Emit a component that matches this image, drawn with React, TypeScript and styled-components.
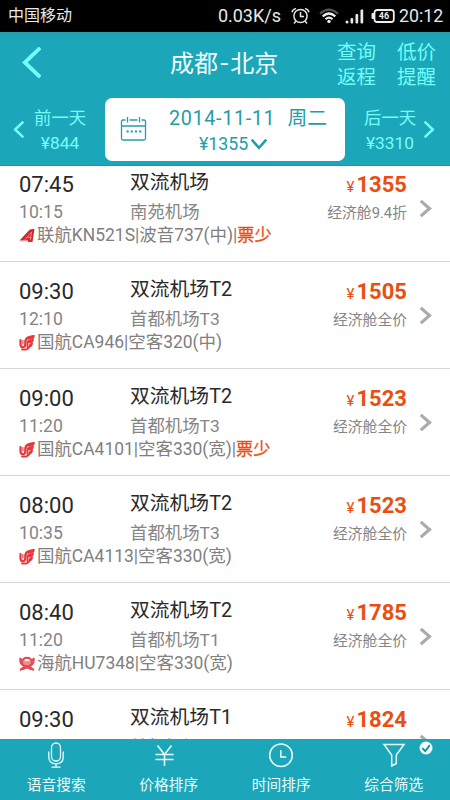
import React from 'react';
import styled, { createGlobalStyle } from 'styled-components';

const teal = '#1ca6b9';
const aqua = '#74fdf8';
const orange = '#ea4e10';

const GlobalStyle = createGlobalStyle`
  * { box-sizing: border-box; }
  body {
    margin: 0;
    overflow: hidden;
    font-family: Roboto, "Noto Sans CJK SC", sans-serif;
  }
  svg { display: block; flex: none; }
`;

const Screen = styled.div`
  width: 450px;
  height: 800px;
  display: flex;
  flex-direction: column;
  overflow: hidden;
  background: #fff;
  white-space: nowrap;
`;

const StatusBar = styled.div`
  height: 32px;
  flex: none;
  display: flex;
  align-items: center;
  padding: 0 7px 0 8px;
  background: #000;
  color: #e8e8e8;
  font-size: 17px;
`;

const Carrier = styled.span`
  font-size: 16px;
  line-height: 32px;
  flex: 1;
`;

const StatusItem = styled.div<{ $gap: number }>`
  margin-left: ${(p) => p.$gap}px;
  line-height: 32px;
`;

const Speed = styled.span`
  line-height: 34px;
  font-size: 18px;
`;

const Clock = styled.span`
  margin-left: 4px;
  width: 44px;
  line-height: 34px;
  font-size: 17.8px;
`;

const Header = styled.header`
  height: 134px;
  flex: none;
  background: linear-gradient(#2b9aaa 0, ${teal} 5px);
  border-bottom: 1px solid #1b97ac;
`;

const TitleBar = styled.div`
  height: 66px;
  display: flex;
  padding-left: 22px;
`;

const BackButton = styled.div`
  width: 148px;
  padding-top: 15px;
`;

const Title = styled.h1`
  margin: 0;
  flex: 1;
  font-size: 24px;
  line-height: 64px;
  font-weight: 400;
  color: #f2ffff;
`;

const Hyphen = styled.span`
  margin: 0 1.4px;
  line-height: 1;
  font-family: "Noto Sans CJK SC", sans-serif;
  font-size: 27px;
`;

const HeaderAction = styled.div`
  width: 60px;
  padding-top: 9px;
  font-size: 19.5px;
  line-height: 24.5px;
  color: ${aqua};
  &:last-child { width: 53px; }
`;

const DateBar = styled.div`
  height: 63px;
  display: flex;
  align-items: stretch;
`;

const DaySwitch = styled.div<{ $side: 'prev' | 'next' }>`
  width: 105px;
  display: flex;
  align-items: flex-start;
  padding-left: ${(p) => (p.$side === 'prev' ? 13 : 19)}px;
  color: ${aqua};
  & > svg { margin-top: 23px; }
`;

const DayText = styled.div<{ $left: number }>`
  width: 52px;
  margin-left: ${(p) => p.$left}px;
  margin-right: 8px;
  padding-top: 8px;
  text-align: center;
  font-size: 17.4px;
  line-height: 24.5px;
`;

const DatePanel = styled.div`
  width: 240px;
  display: flex;
  padding-left: 15px;
  border-radius: 7px;
  background: #fff;
  color: #279ca9;
  & > svg { margin-top: 18px; }
`;

const DateText = styled.div`
  margin-left: 21px;
  width: 160px;
  padding-top: 7px;
`;

const CurrentDate = styled.div`
  display: flex;
  gap: 12px;
  font-size: 19.8px;
  line-height: 28px;
`;

const DateDigits = styled.span`
  letter-spacing: 0.65px;
`;

const CurrentPrice = styled.div`
  display: flex;
  align-items: center;
  gap: 3px;
  padding-left: 30px;
  font-size: 17.8px;
  line-height: 22px;
`;

const List = styled.main`
  flex: 1;
  min-height: 0;
  overflow: hidden;
`;

const FlightRow = styled.article`
  height: 107px;
  padding: 13px 0 0 19px;
  border-bottom: 1px solid #d6d6d6;
  &:first-child { margin-top: -11px; }
`;

const Details = styled.div`
  display: flex;
  height: 56px;
`;

const TimeColumn = styled.div`
  width: 111px;
  padding-top: 2px;
`;

const PlaceColumn = styled.div`
  width: 150px;
`;

const PriceColumn = styled.div`
  flex: 1;
  padding-top: 2px;
  text-align: right;
`;

const Departure = styled.div`
  font-size: 22px;
  line-height: 30px;
  color: #292929;
`;

const Arrival = styled.div`
  margin-top: 1px;
  font-size: 17.6px;
  line-height: 22px;
  color: #858585;
`;

const FromAirport = styled.div`
  font-size: 19.8px;
  line-height: 30px;
  color: #292929;
`;

const ToAirport = styled.div`
  margin-top: 3px;
  font-size: 17.4px;
  line-height: 22px;
  color: #858585;
`;

const Price = styled.div`
  font-size: 22px;
  font-weight: 700;
  line-height: 30px;
  color: ${orange};
`;

const Currency = styled.span`
  font-size: 15px;
  font-weight: 400;
  margin-right: 2px;
`;

const Cabin = styled.div`
  font-size: 14.8px;
  line-height: 22px;
  color: #858585;
`;

const RowArrow = styled.div`
  width: 43px;
  padding: 32px 0 0 13px;
`;

const FlightLine = styled.div`
  display: flex;
  align-items: center;
  height: 22px;
  font-size: 17.45px;
  line-height: 22px;
  color: #808080;
`;

const LogoSlot = styled.span`
  width: 18px;
  padding-top: 1px;
`;

const Scarce = styled.span`
  font-size: 17.2px;
  color: ${orange};
  -webkit-text-stroke: 0.3px ${orange};
`;

const TabBar = styled.nav`
  height: 61px;
  flex: none;
  display: flex;
  background: ${teal};
`;

const Tab = styled.div`
  position: relative;
  flex: 1;
  display: flex;
  flex-direction: column;
  align-items: center;
  padding-top: 3px;
  font-size: 14.7px;
  line-height: 26px;
  color: #e9feff;
  & > span { margin-top: 2px; }
`;

const TabBadge = styled.div`
  position: absolute;
  left: 81px;
  top: 2px;
`;

const Chevron = ({ dir, w, h, stroke, color }: { dir: 'left' | 'right' | 'down'; w: number; h: number; stroke: number; color: string }) => {
  const i = stroke / 2 + 0.3;
  const points = {
    left: `${w - i},${i} ${i + 0.6},${h / 2} ${w - i},${h - i}`,
    right: `${i},${i} ${w - i - 0.6},${h / 2} ${i},${h - i}`,
    down: `${i},${i} ${w / 2},${h - i - 0.6} ${w - i},${i}`,
  }[dir];
  return (
    <svg width={w} height={h} fill="none" stroke={color} strokeWidth={stroke} strokeLinecap="square">
      <polyline points={points} />
    </svg>
  );
};

const AlarmIcon = () => (
  <svg width="19" height="18" fill="none" stroke="#e4e4e4" strokeWidth="1.5">
    <circle cx="9.5" cy="9" r="6.6" />
    <path d="M9.5 5v4.5h3.5M1 5.2Q1.8 2.3 5 1.4M18 5.2Q17.2 2.3 14 1.4M5 14l-2 2.4M14 14l2 2.4" />
  </svg>
);

const WifiIcon = () => (
  <svg width="20" height="16" fill="none" strokeWidth="2.2">
    <path d="M1 5.8Q10-2.7 19 5.8" stroke="#555" />
    <path d="M3.7 8.4Q10 2.6 16.3 8.4M6.5 11.2Q10 8 13.5 11.2" stroke="#eee" />
    <circle cx="10" cy="13.4" r="1.7" fill="#eee" />
  </svg>
);

const SignalIcon = () => (
  <svg width="19" height="15" fill="#e8e8e8">
    <circle cx="2" cy="13" r="1.5" />
    <rect x="5.5" y="9" width="2.7" height="5.5" rx="1" />
    <rect x="10.5" y="5" width="2.7" height="9.5" rx="1" />
    <rect x="15.5" y="0.5" width="2.7" height="14" rx="1" />
  </svg>
);

const BatteryIcon = () => (
  <svg width="24" height="14">
    <rect x="3.5" y="1" width="19.3" height="12" rx="2.5" fill="none" stroke="#eee" strokeWidth="1.8" />
    <path d="M3 4H1.5Q.5 4 .5 5v4q0 1 1 1H3z" fill="#eee" />
    <text x="13" y="10.2" fill="#eee" fontSize="9" fontWeight="700" textAnchor="middle">46</text>
  </svg>
);

const CalendarIcon = () => (
  <svg width="28" height="26" fill="none" stroke="#279ca9" strokeWidth="1.3">
    <path d="M5.5 4H3Q1.5 4 1.5 5.5v17Q1.5 24 3 24h21q1.5 0 1.5-1.5v-17Q25.5 4 24 4h-2.5M9.5 4h8M1.5 10h24" />
    <path d="M7.5 1v5.5M19.5 1v5.5" />
    <path d="M6.5 15.5h15" strokeWidth="2" strokeDasharray="2.2 2" />
  </svg>
);

const RedWingLogo = () => (
  <svg width="16" height="15">
    <path d="M0.5 12.5 10.5 1.8Q12 .7 15.5 1L13.5 14H9.2L8.8 12.4Z" fill="#d22c32" />
    <path d="M8 9.5 12.5 4 11.3 12M5.5 12.2 8 9.5h4.5M1 13.3h8" stroke="#f6b5b4" strokeWidth="0.6" fill="none" />
  </svg>
);

const PhoenixLogo = () => (
  <svg width="16" height="16" fill="none" stroke="#e5383b" strokeLinecap="round">
    <path d="M1.5 5.2V9q0 3.3 2.4 3.3Q6.3 12.300 6.3 9V6.7" strokeWidth="2.2" />
    <path d="M3.9 5.5V9" strokeWidth="1.1" />
    <path d="M6.5 6Q7 2 14.5 1.3Q14.5 3.3 10 3.6" strokeWidth="2.4" />
    <path d="M8.5 12V7.5Q9 5.500 13.8 5Q13.5 7 10.5 7.3" strokeWidth="1.9" />
    <path d="M3 14.5Q8.500 15.300 10.4 12Q10.700 9.200 13 8.700Q12.8 10 11.8 11" strokeWidth="1.9" />
  </svg>
);

const HainanLogo = () => (
  <svg width="16" height="16" fill="none" stroke="#e34b51">
    <ellipse cx="8" cy="6" rx="5" ry="4.2" fill="#f2898b" strokeWidth="2" />
    <path d="M1.3 2.5Q.2 7.8 5 9.8Q8 10.8 11 9.8Q15.8 7.8 14.7 2.5" strokeWidth="1.6" />
    <path d="M3 4.5 1 2M13 4.5l2-2.5M5.5 9.5Q4.8 12.5 1 14M10.5 9.5Q11.2 12.5 15 14M4 13.5Q8 10 12 13.5" strokeWidth="1.9" />
    <ellipse cx="8" cy="4.2" rx="2.5" ry="1.1" fill="#fff" stroke="none" />
  </svg>
);

const MicIcon = () => (
  <svg width="18" height="28" fill="none" stroke="#e9feff" strokeWidth="1.3">
    <rect x="4.5" y="1" width="9" height="18" rx="4.5" />
    <path d="M1.8 9.5V15q0 6.800 7.2 6.800T16.2 15V9.500M9 21.800V25M4.500 25.200h9" />
  </svg>
);

const YuanIcon = () => (
  <svg width="22" height="28" fill="none" stroke="#e9feff" strokeWidth="1.6">
    <path d="M-.5 3.5 6.5 12.500 13.500 3.500M-2.500 12.500h18M-2.500 17.500h18M6.500 12.500V24" />
  </svg>
);

const YuanSlot = styled.div`
  & > svg { overflow: visible; }
`;

const ClockIcon = () => (
  <svg width="26" height="28" fill="none" stroke="#e9feff" strokeWidth="1.5">
    <circle cx="13" cy="13.2" r="11.3" />
    <path d="M12.8 8v7h5.5" />
  </svg>
);

const FunnelIcon = () => (
  <svg width="24" height="28" fill="none" stroke="#e9feff" strokeWidth="1.5">
    <path d="M2 2.5h20L14.3 13v8.500L9.700 24V13Z" />
  </svg>
);

const CheckBadge = () => (
  <svg width="14" height="14">
    <circle cx="7" cy="7" r="6.5" fill="#f4ffff" />
    <path d="M3.3 7.2 6.3 10 10.8 4.2" fill="none" stroke="#168fa4" strokeWidth="1.9" />
  </svg>
);

const logos = { wing: RedWingLogo, phoenix: PhoenixLogo, hainan: HainanLogo };

type Flight = {
  dep: string; arr: string; from: string; to: string;
  price: string; cabin: string; logo: keyof typeof logos; info: string; scarce?: boolean;
};

const flights: Flight[] = [
  { dep: '07:45', arr: '10:15', from: '双流机场', to: '南苑机场', price: '1355', cabin: '经济舱9.4折', logo: 'wing', info: '联航KN521S|波音737(中)', scarce: true },
  { dep: '09:30', arr: '12:10', from: '双流机场T2', to: '首都机场T3', price: '1505', cabin: '经济舱全价', logo: 'phoenix', info: '国航CA946|空客320(中)' },
  { dep: '09:00', arr: '11:20', from: '双流机场T2', to: '首都机场T3', price: '1523', cabin: '经济舱全价', logo: 'phoenix', info: '国航CA4101|空客330(宽)', scarce: true },
  { dep: '08:00', arr: '10:35', from: '双流机场T2', to: '首都机场T3', price: '1523', cabin: '经济舱全价', logo: 'phoenix', info: '国航CA4113|空客330(宽)' },
  { dep: '08:40', arr: '11:20', from: '双流机场T2', to: '首都机场T1', price: '1785', cabin: '经济舱全价', logo: 'hainan', info: '海航HU7348|空客330(宽)' },
  { dep: '09:30', arr: '', from: '双流机场T1', to: '首都机场', price: '1824', cabin: '', logo: 'hainan', info: '' },
];

const FlightItem = ({ flight }: { flight: Flight }) => {
  const Logo = logos[flight.logo];
  return (
    <FlightRow>
      <Details>
        <TimeColumn>
          <Departure>{flight.dep}</Departure>
          <Arrival>{flight.arr}</Arrival>
        </TimeColumn>
        <PlaceColumn>
          <FromAirport>{flight.from}</FromAirport>
          <ToAirport>{flight.to}</ToAirport>
        </PlaceColumn>
        <PriceColumn>
          <Price><Currency>¥</Currency>{flight.price}</Price>
          <Cabin>{flight.cabin}</Cabin>
        </PriceColumn>
        <RowArrow><Chevron dir="right" w={12} h={17} stroke={3.2} color="#ababab" /></RowArrow>
      </Details>
      {flight.info && (
        <FlightLine>
          <LogoSlot><Logo /></LogoSlot>
          {flight.info}
          {flight.scarce && <>|<Scarce>票少</Scarce></>}
        </FlightLine>
      )}
    </FlightRow>
  );
};

export default function App() {
  return (
    <>
      <GlobalStyle />
      <Screen>
        <StatusBar>
          <Carrier>中国移动</Carrier>
          <Speed>0.03K/s</Speed>
          <StatusItem $gap={10}><AlarmIcon /></StatusItem>
          <StatusItem $gap={9}><WifiIcon /></StatusItem>
          <StatusItem $gap={6}><SignalIcon /></StatusItem>
          <StatusItem $gap={7}><BatteryIcon /></StatusItem>
          <Clock>20:12</Clock>
        </StatusBar>
        <Header>
          <TitleBar>
            <BackButton><Chevron dir="left" w={19} h={31} stroke={3.8} color={aqua} /></BackButton>
            <Title>成都<Hyphen>-</Hyphen>北京</Title>
            <HeaderAction>查询<br />返程</HeaderAction>
            <HeaderAction>低价<br />提醒</HeaderAction>
          </TitleBar>
          <DateBar>
            <DaySwitch $side="prev">
              <Chevron dir="left" w={11} h={17} stroke={2.5} color={aqua} />
              <DayText $left={10}>前一天<br />¥844</DayText>
            </DaySwitch>
            <DatePanel>
              <CalendarIcon />
              <DateText>
                <CurrentDate><DateDigits>2014-11-11</DateDigits><span>周二</span></CurrentDate>
                <CurrentPrice>¥1355<Chevron dir="down" w={16} h={11} stroke={2.6} color="#279ca9" /></CurrentPrice>
              </DateText>
            </DatePanel>
            <DaySwitch $side="next">
              <DayText $left={0}>后一天<br />¥3310</DayText>
              <Chevron dir="right" w={11} h={17} stroke={2.5} color={aqua} />
            </DaySwitch>
          </DateBar>
        </Header>
        <List>
          {flights.map((flight, i) => <FlightItem key={i} flight={flight} />)}
        </List>
        <TabBar>
          <Tab><MicIcon /><span>语音搜索</span></Tab>
          <Tab><YuanSlot><YuanIcon /></YuanSlot><span>价格排序</span></Tab>
          <Tab><ClockIcon /><span>时间排序</span></Tab>
          <Tab><FunnelIcon /><span>综合筛选</span><TabBadge><CheckBadge /></TabBadge></Tab>
        </TabBar>
      </Screen>
    </>
  );
}
